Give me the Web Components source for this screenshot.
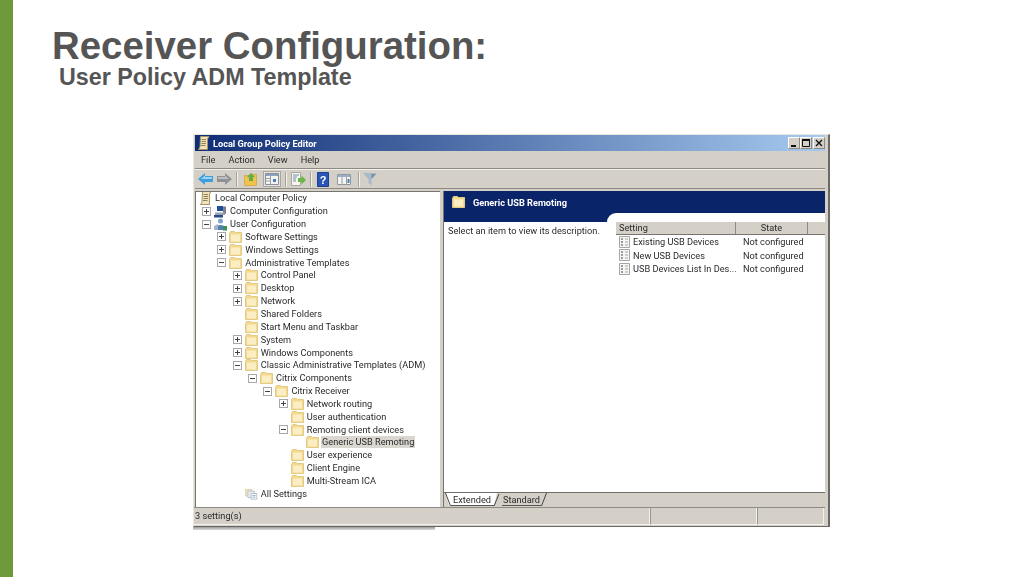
<!DOCTYPE html>
<html>
<head>
<meta charset="utf-8">
<title>Receiver Configuration</title>
<style>
    html, body { margin: 0; height: 100%; background: #fff; overflow: hidden; }
</style>
</head>
<body>
<slide-page>
    <span slot="title">Receiver Configuration:</span>
    <span slot="subtitle">User Policy ADM Template</span>
    <gp-window></gp-window>
</slide-page>

<script>
const ICONS = {
    folder: `<svg width="13" height="12" viewBox="0 0 13 12"><path d="M.5 2.500V11.500H12.500V1.500H6.500L5.500.5H1.500Z" fill="#f3d98e" stroke="#e3cb87"/><path d="M2 3.500H11V10.500H2Z" fill="#fbeec4"/></svg>`,
    policy: `<svg width="13" height="14" viewBox="0 0 13 14"><path d="M3.500.5H12L10.500 3V13.500H1.500L3 11Z" fill="#f3e3b4" stroke="#a3936a"/><path d="M4.500 3.500H9M4.500 5.500H9M4.500 7.500H9M4 9.500H8.500" stroke="#8a8462"/></svg>`,
    computer: `<svg width="13" height="13" viewBox="0 0 13 13"><path d="M3 1H9V6H3Z" fill="#1f4f9a"/><path d="M9 1.500H12V9H9Z" fill="#7a7f8e"/><path d="M1 7.500H11V10H1Z" fill="#9aa3b5"/><path d="M0 10H9V12.500H0Z" fill="#2c4a86"/></svg>`,
    user: `<svg width="13" height="13" viewBox="0 0 13 13"><circle cx="6.500" cy="3" r="2.500" fill="#7ea3cf"/><path d="M2 10C2 6 11 6 11 10V12H2Z" fill="#4f7fb5"/><path d="M0 8L4 6V12H0Z" fill="#a7b4c4"/><path d="M9 8H13V12.500H9Z" fill="#3e8f54"/></svg>`,
    settings: `<svg width="16" height="15" viewBox="0 0 16 15"><path d="M.5 2.500H8.500V10.500H.5Z" fill="#efe6c2" stroke="#d8cda0"/><path d="M3.500 4.500H11.500V12.500H3.500Z" fill="#e6edf5" stroke="#b3bdc9"/><path d="M7.500 7.500H14.500V14.500H7.500Z" fill="#fff" stroke="#aab5c2"/><path d="M9 10H13M9 12H13" stroke="#8aa0b8"/></svg>`,
    setting: `<svg width="11" height="12" viewBox="0 0 11 12"><path d="M.5.5H10.500V11.500H.5Z" fill="#f6f6f2" stroke="#a5a5a5"/><path d="M2 3H4M2 6H4M2 9H4" stroke="#444"/><path d="M6 3H9M6 6H9M6 9H9" stroke="#a5a5a5"/></svg>`,
    back: `<svg width="15" height="12" viewBox="0 0 15 12"><path d="M0 6L7 0V3H15V9H7V12Z" fill="#3f9fdc"/><path d="M3 6L7 2.500V4H14V6Z" fill="#9ad4f2"/></svg>`,
    forward: `<svg width="15" height="12" viewBox="0 0 15 12"><path d="M15 6L8 0V3H0V9H8V12Z" fill="#8f9296"/><path d="M1 4H8V2.500L12 6H1Z" fill="#bcbec0"/></svg>`,
    up: `<svg width="13" height="14" viewBox="0 0 13 14"><path d="M.5 3.500H5L6 2.500H12.500V13.500H.5Z" fill="#f0c24e" stroke="#d9ad4c"/><path d="M7 1L11 5H9V9H5V5H3Z" fill="#5fb04a"/></svg>`,
    panes: `<svg width="14" height="12" viewBox="0 0 14 12"><path d="M.5.5H13.500V11.500H.5Z" fill="#f4f4f0" stroke="#8c8f96"/><path d="M1 1H13V3H1Z" fill="#8da2bf"/><path d="M5.500 3V11M1 5.500H5M1 8H5" stroke="#9aa0a8"/><path d="M8 6H11V9H8Z" fill="#4c7eb3"/></svg>`,
    exporter: `<svg width="15" height="14" viewBox="0 0 15 14"><path d="M.5.5H9.500V13.500H.5Z" fill="#f6f6ee" stroke="#a8a89d"/><path d="M2 3H8M2 5H6M2 7H5M2 9H5" stroke="#6f8fb0"/><path d="M7 6H10.500V3.500L15 8L10.500 12.500V10H7Z" fill="#6bb64a"/></svg>`,
    help: `<svg width="12" height="15" viewBox="0 0 12 15"><path d="M.5.5H11.500V14.500H.5Z" fill="#2a55b5" stroke="#1d3f91"/><text x="6" y="11.500" font-family="Liberation Sans" font-size="11" font-weight="700" fill="#fff" text-anchor="middle">?</text></svg>`,
    columns: `<svg width="14" height="11" viewBox="0 0 14 11"><path d="M.5.5H13.500V10.500H.5Z" fill="#f4f4f0" stroke="#93989e"/><path d="M1 1H13V3H1Z" fill="#9aadc6"/><path d="M5 3V10M9.500 3V10" stroke="#9aa0a8"/><path d="M10.500 5H12.500V9H10.500Z" fill="#4c7eb3"/></svg>`,
    filter: `<svg width="14" height="14" viewBox="0 0 14 14"><path d="M0 1H14L8.500 7V13.500L5.500 11V7Z" fill="#a9b9c8"/><path d="M8.500 2H13L8.500 7Z" fill="#7890a6"/></svg>`
};

class GpIcon extends HTMLElement {
    connectedCallback() {
        this.attachShadow({ mode: 'open' });
        this.shadowRoot.innerHTML = `
            <style>
                :host { display: inline-flex; align-items: center; justify-content: center; flex: none; }
                svg { display: block; }
            </style>
            ${ICONS[this.getAttribute('name')] || ''}
        `;
    }
}
customElements.define('gp-icon', GpIcon);

class SlidePage extends HTMLElement {
    constructor() {
        super();
        this.attachShadow({ mode: 'open' });
        this.shadowRoot.innerHTML = `
            <style>
                :host {
                    display: flex;
                    width: 1023px;
                    height: 577px;
                    font-family: "Liberation Sans", Arial, sans-serif;
                    color: #555;
                }
                .bar { width: 13px; flex: none; background: #6f9a3c; }
                .main { flex: 1; min-width: 0; display: flex; flex-direction: column; }
                .title {
                    font-size: 38.4px;
                    font-weight: 700;
                    line-height: 42px;
                    margin: 25px 0 0 39px;
                    white-space: nowrap;
                }
                .subtitle {
                    font-size: 23.3px;
                    font-weight: 700;
                    line-height: 26px;
                    margin: -3px 0 0 46px;
                    white-space: nowrap;
                }
                .stage { margin: 44px 0 0 180px; }
            </style>
            <div class="bar"></div>
            <div class="main">
                <div class="title"><slot name="title"></slot></div>
                <div class="subtitle"><slot name="subtitle"></slot></div>
                <div class="stage"><slot></slot></div>
            </div>
        `;
    }
}
customElements.define('slide-page', SlidePage);

class TreeRow extends HTMLElement {
    constructor() {
        super();
        this.attachShadow({ mode: 'open' });
    }

    connectedCallback() {
        const depth = Number(this.getAttribute('depth') || 0);
        const exp = this.getAttribute('exp');
        const icon = this.getAttribute('icon') || 'folder';
        const box = exp
            ? `<span class="box">${exp === '+' ? '<i class="h"></i><i class="v"></i>' : '<i class="h"></i>'}</span>`
            : '<span class="box none"></span>';
        const lead = this.hasAttribute('root') ? '' : box;
        this.shadowRoot.innerHTML = `
            <style>
                :host {
                    display: flex;
                    align-items: center;
                    height: 12.85px;
                    white-space: nowrap;
                    padding-left: ${this.hasAttribute('root') ? 3 : 6 + depth * 15.35}px;
                }
                .box {
                    width: 7px;
                    height: 7px;
                    flex: none;
                    border: 1px solid #a8a8a8;
                    margin-right: 3px;
                    position: relative;
                    background: #fff;
                }
                .box.none { border-color: transparent; background: none; }
                i { position: absolute; background: #444; }
                .h { left: 1px; right: 1px; top: 3px; height: 1px; }
                .v { top: 1px; bottom: 1px; left: 3px; width: 1px; }
                gp-icon { width: 13px; margin-right: 3px; }
                .label { padding: 0 1px; line-height: 12px; margin-left: -1px; }
                :host([selected]) .label { background: #d9d7d0; }
            </style>
            ${lead}
            <gp-icon name="${icon}"></gp-icon>
            <span class="label"><slot></slot></span>
        `;
    }
}
customElements.define('tree-row', TreeRow);

class ToolBar extends HTMLElement {
    constructor() {
        super();
        this.attachShadow({ mode: 'open' });
        this.shadowRoot.innerHTML = `
            <style>
                :host {
                    display: flex;
                    align-items: center;
                    height: 20px;
                    padding-left: 3px;
                    box-sizing: border-box;
                    background: #d4d0c8;
                    border-top: 1px solid #f4f2ec;
                    border-bottom: 1px solid #8d8a83;
                }
                .sep { width: 1px; height: 15px; background: #a5a29a; border-right: 1px solid #f4f2ec; flex: none; }
                .on { width: 18px; height: 16px; background: #e6e4de; outline: 1px solid #a8a6a0; outline-offset: -1px; }
            </style>
            <gp-icon name="back" style="margin-right:4px"></gp-icon>
            <gp-icon name="forward" style="margin-right:4px"></gp-icon>
            <span class="sep"></span>
            <gp-icon name="up" style="margin:0 6px"></gp-icon>
            <gp-icon class="on" name="panes" style="margin-right:4px"></gp-icon>
            <span class="sep"></span>
            <gp-icon name="exporter" style="margin:0 4px"></gp-icon>
            <span class="sep"></span>
            <gp-icon name="help" style="margin:0 6px 0 5px"></gp-icon>
            <gp-icon name="columns" style="margin:0 7px 0 2px"></gp-icon>
            <span class="sep"></span>
            <gp-icon name="filter" style="margin-left:3px"></gp-icon>
        `;
    }
}
customElements.define('tool-bar', ToolBar);

class SettingsView extends HTMLElement {
    constructor() {
        super();
        this.attachShadow({ mode: 'open' });
        this.shadowRoot.innerHTML = `
            <style>
                :host { display: flex; flex-direction: column; height: 100%; background: #fff; }
                .band { background: #0a246a; height: 31px; flex: none; display: flex; flex-direction: column; }
                .head { height: 22px; display: flex; align-items: center; padding-left: 8px; color: #fff; font-weight: 700; }
                .head gp-icon { margin-right: 8px; }
                .notch { flex: 1; display: flex; }
                .notch div { width: 163px; flex: none; }
                .notch b { flex: 1; background: #fff; border-top-left-radius: 10px; }
                .body { flex: 1; display: grid; grid-template-columns: 172px 1fr; }
                .desc { padding: 3px 0 0 4px; line-height: 12px; white-space: nowrap; }
                .cols {
                    display: grid;
                    grid-template-columns: 120px 72px 1fr;
                    height: 12px;
                    background: #d4d0c8;
                    border-bottom: 1px solid #77756f;
                    line-height: 12px;
                }
                .cols span { border-right: 1px solid #8d8a83; padding-left: 3px; }
                .cols span:nth-child(2) { text-align: center; padding: 0; }
                .cols span:last-child { border: 0; }
                .row { display: grid; grid-template-columns: 124px 1fr; height: 13.5px; align-items: center; padding-left: 3px; white-space: nowrap; }
                .row:first-of-type { margin-top: 1px; }
                .name { display: flex; align-items: center; }
                .name gp-icon { margin-right: 3px; }
            </style>
            <div class="band">
                <div class="head"><gp-icon name="folder"></gp-icon>Generic USB Remoting</div>
                <div class="notch"><div></div><b></b></div>
            </div>
            <div class="body">
                <div class="desc">Select an item to view its description.</div>
                <div class="list">
                    <div class="cols"><span>Setting</span><span>State</span><span></span></div>
                    <div class="row"><span class="name"><gp-icon name="setting"></gp-icon>Existing USB Devices</span><span>Not configured</span></div>
                    <div class="row"><span class="name"><gp-icon name="setting"></gp-icon>New USB Devices</span><span>Not configured</span></div>
                    <div class="row"><span class="name"><gp-icon name="setting"></gp-icon>USB Devices List In Des...</span><span>Not configured</span></div>
                </div>
            </div>
        `;
    }
}
customElements.define('settings-view', SettingsView);

class ViewTabs extends HTMLElement {
    constructor() {
        super();
        this.attachShadow({ mode: 'open' });
        this.shadowRoot.innerHTML = `
            <style>
                :host {
                    display: flex;
                    align-items: flex-start;
                    height: 14px;
                    background: #d4d0c8;
                    border-top: 1px solid #6e6c67;
                    padding-left: 1px;
                }
                .tab { display: flex; height: 13px; line-height: 13px; }
                .tab span { padding: 0 1px; border-bottom: 1px solid #555; box-sizing: border-box; height: 13px; }
                .tab.on span { background: #fff; padding: 0 3px 0 2px; }
                svg { display: block; flex: none; }
            </style>
            <div class="tab on">
                <svg width="6" height="13"><path d="M0 13H6V0H0Z" fill="#fff"/><path d="M0 0L0 13H4L0 0Z" fill="#d4d0c8"/><path d="M.5 0L5.500 13" stroke="#444" fill="none"/></svg>
                <span>Extended</span>
                <svg width="6" height="13"><path d="M0 0H3L0 13Z" fill="#fff"/><path d="M5 1L0 13" stroke="#444" fill="none"/></svg>
            </div>
            <div class="tab">
                <svg width="2" height="13"></svg>
                <span>Standard</span>
                <svg width="6" height="13"><path d="M5.500 0L.5 13" stroke="#444" fill="none"/></svg>
            </div>
        `;
    }
}
customElements.define('view-tabs', ViewTabs);

class GpWindow extends HTMLElement {
    constructor() {
        super();
        this.attachShadow({ mode: 'open' });
        const rows = [
            ['0', '', 'computer', 'Computer Configuration', '+'],
            ['0', '', 'user', 'User Configuration', '-'],
            ['1', '', 'folder', 'Software Settings', '+'],
            ['1', '', 'folder', 'Windows Settings', '+'],
            ['1', '', 'folder', 'Administrative Templates', '-'],
            ['2', '', 'folder', 'Control Panel', '+'],
            ['2', '', 'folder', 'Desktop', '+'],
            ['2', '', 'folder', 'Network', '+'],
            ['2', '', 'folder', 'Shared Folders', ''],
            ['2', '', 'folder', 'Start Menu and Taskbar', ''],
            ['2', '', 'folder', 'System', '+'],
            ['2', '', 'folder', 'Windows Components', '+'],
            ['2', '', 'folder', 'Classic Administrative Templates (ADM)', '-'],
            ['3', '', 'folder', 'Citrix Components', '-'],
            ['4', '', 'folder', 'Citrix Receiver', '-'],
            ['5', '', 'folder', 'Network routing', '+'],
            ['5', '', 'folder', 'User authentication', ''],
            ['5', '', 'folder', 'Remoting client devices', '-'],
            ['6', 'selected', 'folder', 'Generic USB Remoting', ''],
            ['5', '', 'folder', 'User experience', ''],
            ['5', '', 'folder', 'Client Engine', ''],
            ['5', '', 'folder', 'Multi-Stream ICA', ''],
            ['2', '', 'settings', 'All Settings', '']
        ].map(([d, sel, icon, text, exp]) =>
            `<tree-row depth="${d}" icon="${icon}" exp="${exp}" ${sel}>${text}</tree-row>`).join('');

        this.shadowRoot.innerHTML = `
            <style>
                :host {
                    display: block;
                    position: relative;
                    width: 637px;
                    font: 9.2px Roboto, "Noto Sans", sans-serif;
                    color: #2a2a2a;
                    filter: blur(.3px);
                }
                .frame {
                    height: 393px;
                    box-sizing: border-box;
                    background: #d4d0c8;
                    border-top: 1px solid #e8e6e0;
                    border-right: 2px solid #6b6965;
                    border-bottom: 1px solid #6b6965;
                    border-left: 1px solid #e8e6e0;
                    padding: 0 3px 0 1px;
                    display: flex;
                    flex-direction: column;
                }
                .caption {
                    height: 16px;
                    flex: none;
                    display: flex;
                    align-items: center;
                    padding-left: 2px;
                    color: #fff;
                    font-weight: 700;
                    background: linear-gradient(90deg, #0f2d75, #a6caf0);
                }
                .caption gp-icon { margin-right: 3px; }
                .caption .name { flex: 1; }
                .ctl {
                    width: 12px; height: 12px; box-sizing: border-box;
                    background: #d4d0c8;
                    border: 1px solid #8d8a83;
                    border-top-color: #fff; border-left-color: #fff;
                    color: #111; display: flex; align-items: center; justify-content: center;
                }
                .ctl svg { display: block; }
                .menu {
                    height: 18px; flex: none; display: flex; align-items: center; padding-left: 6px; gap: 13px;
                    border-bottom: 1px solid #8d8a83;
                    box-sizing: border-box;
                }
                .panes { height: 316px; flex: none; display: flex; margin-top: 2px; }
                .tree {
                    width: 245px; flex: none; box-sizing: border-box; background: #fff;
                    border-top: 1px solid #77756f; border-left: 1px solid #77756f;
                    overflow: hidden;
                }
                .split { width: 3px; flex: none; }
                .right {
                    flex: 1; min-width: 0; display: flex; flex-direction: column;
                    border-left: 1px solid #77756f;
                }
                .right settings-view { flex: 1; min-height: 0; }
                .status {
                    height: 18px; flex: none; display: grid; grid-template-columns: 456px 107px 67px;
                    border-top: 1px solid #8d8a83;
                    box-sizing: border-box;
                    line-height: 15px;
                    margin-left: -1px;
                }
                .status span { border-right: 1px solid #f4f2ec; border-left: 1px solid #98958e; padding-left: 1px; border-bottom: 1px solid #f4f2ec; }
                .status span:first-child { border-left: 0; }
                .strip { width: 242px; height: 3px; background: linear-gradient(#9a9a9a, #dcdcdc); }
            </style>
            <div class="frame">
                <div class="caption">
                    <gp-icon name="policy"></gp-icon>
                    <span class="name">Local Group Policy Editor</span>
                    <span class="ctl"><svg width="8" height="8"><path d="M1 7H6" stroke="#111" stroke-width="2"/></svg></span>
                    <span class="ctl"><svg width="8" height="8"><path d="M.5 1.500H7.500V7.500H.5Z" fill="none" stroke="#111"/><path d="M0 1H8" stroke="#111" stroke-width="2"/></svg></span>
                    <span class="ctl" style="margin-left:1px"><svg width="8" height="8"><path d="M1 1L7 7M7 1L1 7" stroke="#111" stroke-width="1.400"/></svg></span>
                </div>
                <div class="menu"><span>File</span><span>Action</span><span>View</span><span>Help</span></div>
                <tool-bar></tool-bar>
                <div class="panes">
                    <div class="tree">
                        <tree-row root icon="policy">Local Computer Policy</tree-row>
                        ${rows}
                    </div>
                    <div class="split"></div>
                    <div class="right">
                        <settings-view></settings-view>
                        <view-tabs></view-tabs>
                    </div>
                </div>
                <div class="status"><span>3 setting(s)</span><span></span><span></span></div>
            </div>
            <div class="strip"></div>
        `;
    }
}
customElements.define('gp-window', GpWindow);
</script>
</body>
</html>
